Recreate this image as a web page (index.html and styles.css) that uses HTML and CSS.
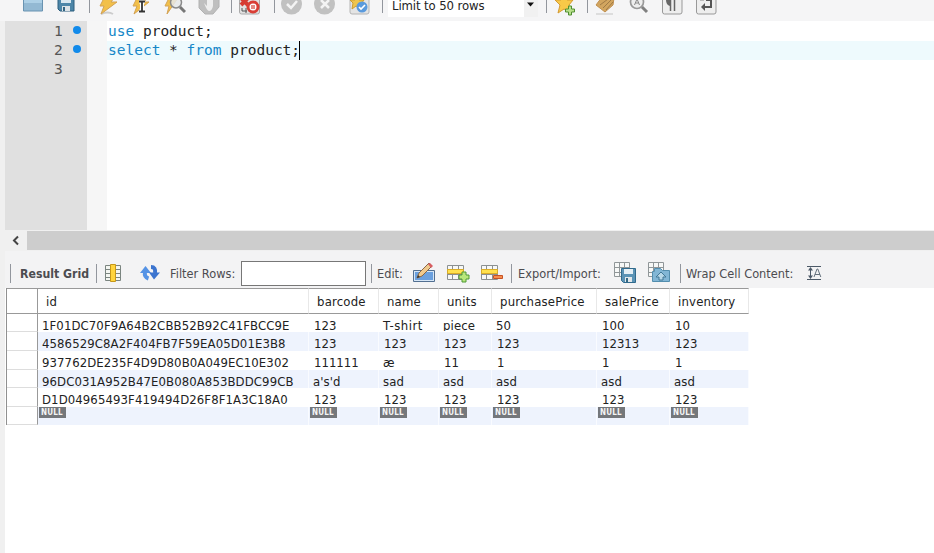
FILE: index.html
```html
<!DOCTYPE html>
<html lang="en">
<head>
<meta charset="utf-8">
<title>SQL Editor</title>
<link rel="stylesheet" href="styles.css">
</head>
<body>
<div class="window">
  <header class="toolbar">
    <svg class="folder" viewBox="0 0 22 16"><path d="M1.500-2h19v13h-19z" fill="#93b9d3" stroke="#6993b1"/><path d="M2 0h18v3H2z" fill="#add0e6"/></svg>
    <svg class="save" viewBox="0 0 18 16"><path d="M1-2h16v13H3l-2-2z" fill="#4d86a8" stroke="#2c5f7e"/><path d="M4 0h10v3H4z" fill="#d9e7ef"/><path d="M5 6h8v5H5z" fill="#dce3e7"/><path d="M6 7h2v4H6z" fill="#326482"/></svg>
    <i class="sep"></i>
    <svg class="icon" viewBox="0 0 22 16"><path d="M3 14q7-3 12 0" stroke="#ccc" stroke-width="2" fill="none"/><path d="M6-2h10l-3 4h6L3 14l3-8H2z" fill="#f2c04a" stroke="#d3a254"/></svg>
    <svg class="icon" viewBox="0 0 22 16"><path d="M6-2h10l-3 4h5L3 14l3-8H2z" fill="#f2c04a" stroke="#d3a254"/><path d="M8 1.500h6M11 1.500v10M8 11.500h6" stroke="#fff" stroke-width="4"/><path d="M8 1.500h6M11 1.500v10M8 11.500h6" stroke="#333" stroke-width="1.800"/></svg>
    <svg class="icon" viewBox="0 0 22 16"><path d="M5-2h9L3 14l2-8H1z" fill="#f2c04a" stroke="#d3a254"/><circle cx="12" cy="2.500" r="5.500" fill="#e5e8e9" fill-opacity=".85" stroke="#8a8a8a" stroke-width="1.500"/><path d="m16 7 5 5" stroke="#777" stroke-width="3"/></svg>
    <svg class="icon" viewBox="0 0 22 16"><path d="M1-2h20v9l-6 7H7L1 8z" fill="#bfbfbf" stroke="#b2b2b2"/><path d="M6 3l3 3V0h2v4-5h2v5-4h2v6q-1 5-4 5-2 0-5-8z" fill="#eee"/></svg>
    <i class="sep"></i>
    <svg class="icon" viewBox="0 0 22 16"><rect x=".5" y="-3" width="20" height="17" rx="2" fill="#e1e1e1" stroke="#aaa"/><path d="M2-2l7 7M9-2L2 5" stroke="#d63b32" stroke-width="4"/><path d="M3 8v3h5M7 8v5" stroke="#555" fill="none"/><circle cx="14" cy="7" r="5" fill="#fff" stroke="#d93e35" stroke-width="3"/><path d="M12 5h4v4h-4z" fill="#e58b83"/></svg>
    <i class="sep"></i>
    <svg class="icon" viewBox="0 0 22 16"><circle cx="10.500" cy="4" r="10.500" fill="#c1c1c1"/><path d="m6 4 4 4 6-7" fill="none" stroke="#f3f3f3" stroke-width="2.500"/></svg>
    <svg class="icon" viewBox="0 0 22 16"><circle cx="10.500" cy="4" r="10.500" fill="#c1c1c1"/><path d="m7 0 8 8M15 0 7 8" stroke="#f3f3f3" stroke-width="2.500"/></svg>
    <svg class="icon" viewBox="0 0 22 16"><rect x="1" y="-3" width="19" height="17" rx="2" fill="#e4e4e4" stroke="#b4b4b4"/><path d="M8-3l2 3h5l-3 4 1 5-6-3-4 3 1-6-3-3h5z" fill="#efc54d" stroke="#ce9c30"/><circle cx="13" cy="7" r="5.500" fill="#5a9add"/><path d="m10 7 2 2 4-4" fill="none" stroke="#fff" stroke-width="1.600"/></svg>
    <i class="sep"></i>
    <div class="select"><span>Limit to 50 rows</span><b><svg viewBox="0 0 14 16"><path d="M3 2.500h7L6.500 6.500z" fill="#111"/></svg></b></div>
    <i class="sep"></i>
    <svg class="icon" viewBox="0 0 22 16"><path d="m9-7 3 7h6l-4 5 2 8-7-4-6 4 2-8-5-5h6z" fill="#f8c948" stroke="#d49a32"/><path d="M13.500 6h3v3h3v3h-3v3h-3v-3h-3V9h3z" fill="#b8e08b" stroke="#508f30"/></svg>
    <i class="sep"></i>
    <svg class="icon" viewBox="0 0 22 16"><path d="M1 14h17" stroke="#ddd" stroke-width="2"/><path d="M7-3l12 1-1 7-8 7L1 5z" fill="#d2a55f" stroke="#c09050"/><path d="m5 5 8-6M8 8l8-8M11 10l7-8" stroke="#a07a45"/></svg>
    <svg class="icon" viewBox="0 0 22 16"><circle cx="8" cy="2" r="6.500" fill="#eee" stroke="#999" stroke-width="1.700"/><path d="m5.500 5 2.500-6 2.500 6M6.500 3h3" stroke="#888" fill="none"/><path d="m13 7 5 5" stroke="#808080" stroke-width="3"/></svg>
    <svg class="icon" viewBox="0 0 22 16"><rect x=".5" y="-3" width="19.500" height="17" rx="2" fill="#eee" stroke="#999"/><path d="M12.500-2v13M8.500-2v13" stroke="#666" stroke-width="1.500"/><path d="M8 0v6Q4 5 4 0" fill="#666"/></svg>
    <svg class="icon" viewBox="0 0 22 16"><rect x=".5" y="-3" width="19.500" height="17" rx="2" fill="#eee" stroke="#999"/><path d="M10 0h5v7H8" fill="none" stroke="#555" stroke-width="2"/><path d="M9 3v8L5 7z" fill="#555"/><path d="M4 0h4" stroke="#888"/></svg>
  </header>

  <main class="content">
    <section class="editor">
      <div class="gutter">
        <div class="line-no">1<i></i></div>
        <div class="line-no">2<i></i></div>
        <div class="line-no">3</div>
      </div>
      <div class="fold"></div>
      <div class="code">
        <div class="line"><span class="kw">use</span> product;</div>
        <div class="line current"><span class="kw">select</span> * <span class="kw">from</span> product;<i class="caret"></i></div>
        <div class="line"></div>
      </div>
    </section>
    <div class="scrollbar"><svg viewBox="0 0 21 19"><path d="M13 5.500 9 9.500l4 4" fill="none" stroke="#444" stroke-width="2"/></svg><div class="thumb"></div></div>

    <div class="resultbar">
      <i class="sep"></i>
      <span class="title">Result Grid</span>
      <i class="sep"></i>
      <svg class="tool" viewBox="0 0 18 20"><path d="M1.500 2.500h15v15h-15zM1 6.500h16M1 10.500h16M1 14.500h16" fill="#f4f6f1" stroke="#7b8580"/><path d="M6.500 1.500h5v17h-5z" fill="#ffd43d" stroke="#c69719"/></svg>
      <svg class="tool refresh" viewBox="0 0 20 20"><path d="M8.500 15.500Q4 14 5 9" fill="none" stroke="#5593e5" stroke-width="4"/><path d="M0 10 5.500 3l5.500 7z" fill="#5593e5"/><path d="M11 4q5 0 4 6" fill="none" stroke="#3b74cf" stroke-width="4"/><path d="M9 9.500h11l-6 7z" fill="#3b74cf"/></svg>
      <span class="filter">Filter Rows:</span>
      <input class="search" type="text" aria-label="Filter rows">
      <i class="sep"></i>
      <span class="edit">Edit:</span>
      <svg class="tool pencil" viewBox="0 0 24 20"><path d="M1.500 7.500h21v11h-21z" fill="#d6e6f6" stroke="#526f91"/><path d="M3 9h18v8H3z" fill="#6aa0df"/><path d="m5 15 2-5L17 0l3 3-10 10z" fill="#f0ca8d" stroke="#8a6847"/><path d="m16 1 2-1 3 3-2 2z" fill="#d85c60"/><path d="m5 15 1-3 2 2z" fill="#333"/></svg>
      <svg class="tool rows" viewBox="0 0 24 20"><path d="M1.500 2.500h16v14h-16zM1 6.500h17M1 11.500h17M6.500 2v15M12.500 2v15" fill="#f7f8f7" stroke="#8b9091"/><path d="M1.500 6.500h16v4h-16z" fill="#ffe14d" stroke="#daac27"/><path d="M16 9h4v3h3v4h-3v3h-4v-3h-3v-4h3z" fill="#b8e77b" stroke="#4e9936"/></svg>
      <svg class="tool rows" viewBox="0 0 24 20"><path d="M1.500 2.500h16v14h-16zM1 6.500h17M1 11.500h17M6.500 2v15M12.500 2v15" fill="#f7f8f7" stroke="#8b9091"/><path d="M1.500 6.500h16v4h-16z" fill="#ffe14d" stroke="#daac27"/><path d="M13.500 12.500h9v3h-9z" fill="#f58c4d" stroke="#c65224"/></svg>
      <i class="sep export-sep"></i>
      <span class="export">Export/Import:</span>
      <svg class="tool disk" viewBox="0 0 24 22"><path d="M1.500.5h15v14h-15zM1 5.500h16M1 10.500h16M6.500 0v15M11.500 0v15" fill="#f7f8f7" stroke="#909698"/><path d="M8.500 6.500h14v14h-12l-2-2z" fill="#5b93b5" stroke="#316a8c"/><path d="M11 7h9v5h-9z" fill="#e5eff5"/><path d="M12 15h7v5h-7z" fill="#e2e8eb"/><path d="M13 16h2v4h-2z" fill="#346985"/></svg>
      <svg class="tool disk" viewBox="0 0 24 22"><path d="M1.500.5h15v14h-15zM1 5.500h16M1 10.500h16M6.500 0v15M11.500 0v15" fill="#f7f8f7" stroke="#909698"/><path d="M5.500 19.500V9.500h2v-3h6l2 2h7v11z" fill="#82b6d5" stroke="#538eae"/><path d="m14 10 5 5h-3v3h-4v-3H9z" fill="#b8d8e8" stroke="#427997"/></svg>
      <i class="sep wrap-sep"></i>
      <span class="wrap">Wrap Cell Content:</span>
      <svg class="tool wrap-icon" viewBox="0 0 16 16"><path d="M1 1.500h14M1 14.500h14M4.500 3v10" stroke="#4c5967"/><path d="M2 5.500 4.500 2 7 5.500zM2 10.500 4.500 14 7 10.500z" fill="#4c5967"/><path d="m8 12 3-8h.8l3 8M9 9.500h5" fill="none" stroke="#65717d"/></svg>
    </div>

    <table class="grid">
      <colgroup><col class="c0"><col class="c1"><col class="c2"><col class="c3"><col class="c4"><col class="c5"><col class="c6"><col class="c7"></colgroup>
      <thead><tr><th></th><th>id</th><th>barcode</th><th>name</th><th>units</th><th class="pp">purchasePrice</th><th>salePrice</th><th>inventory</th></tr></thead>
      <tbody>
        <tr class="short"><td></td><td class="r1">1F01DC70F9A64B2CBB52B92C41FBCC9E</td><td class="n">123</td><td class="shirt">T-shirt</td><td><span class="clip">piece</span></td><td>50</td><td class="n">100</td><td class="n">10</td></tr>
        <tr><td></td><td class="r2">4586529C8A2F404FB7F59EA05D01E3B8</td><td class="n">123</td><td class="n">123</td><td class="n">123</td><td class="n">123</td><td class="n">12313</td><td class="n">123</td></tr>
        <tr><td></td><td class="r3">937762DE235F4D9D80B0A049EC10E302</td><td class="n">111111</td><td>æ</td><td class="n">11</td><td class="n">1</td><td class="n">1</td><td class="n">1</td></tr>
        <tr class="short"><td></td><td class="r4">96DC031A952B47E0B080A853BDDC99CB</td><td>a's'd</td><td>sad</td><td>asd</td><td>asd</td><td>asd</td><td>asd</td></tr>
        <tr><td></td><td class="r5">D1D04965493F419494D26F8F1A3C18A0</td><td class="n">123</td><td class="n">123</td><td class="n">123</td><td class="n">123</td><td class="n">123</td><td class="n">123</td></tr>
        <tr class="nulls short"><td></td><td><span>NULL</span></td><td><span>NULL</span></td><td><span>NULL</span></td><td><span>NULL</span></td><td><span>NULL</span></td><td><span>NULL</span></td><td><span>NULL</span></td></tr>
      </tbody>
    </table>
  </main>
</div>
</body>
</html>
```
FILE: styles.css
```css
* { box-sizing: border-box; }
body { margin: 0; overflow: hidden; background: #fff; color: #242424; font-family: "DejaVu Sans Condensed", "DejaVu Sans", sans-serif; font-size: 13px; }
.window { width: 934px; height: 553px; background: #f0f0f0; }
svg { display: block; }
.sep { width: 1px; background: #92969d; }

.toolbar { height: 21px; background: #f5f5f6; display: grid; align-items: start;
  padding-left: 22px;
  grid-template-columns: 35px 32px 9px 33px 33px 34px 33px 8px 35px 7px 33px 35px 33px 6px 158px 9px 32px 8px 34px 33px 34px 22px; }
.toolbar > svg { width: 22px; height: 16px; }
.toolbar .save { width: 18px; }
.toolbar .sep { height: 13px; }
.select { width: 150px; height: 17px; background: #fff; display: flex; justify-content: space-between; }
.select span { padding-left: 4px; line-height: 11px; letter-spacing: -.1px; white-space: nowrap; }
.select b { width: 14px; background: #f1f1f1; }
.select svg { width: 14px; height: 16px; }

.content { margin-left: 5px; height: 532px; background: #fff; }
.editor { height: 209px; display: flex; font: 14.5px/19px "DejaVu Sans Mono", monospace; }
.gutter { width: 82px; background: #e0e0e0; padding-top: 1px; }
.line-no { height: 19px; padding-left: 49px; display: flex; align-items: center; color: #555; }
.line-no i { width: 8px; height: 8px; border-radius: 50%; background: #118aea; margin: -3px 0 0 10px; }
.fold { width: 20px; background: #f6f6f6; }
.code { flex: 1; padding-top: 1px; }
.line { height: 19px; padding-left: 1px; display: flex; white-space: pre; color: #222; }
.kw { color: #1687c8; }
.current { background: #eefafd; }
.caret { width: 1px; height: 19px; background: #000; margin-left: -1px; }

.scrollbar { height: 21px; padding-top: 1px; background: #f0f0f0; display: flex; }
.scrollbar svg { width: 21px; height: 19px; }
.thumb { flex: 1; height: 19px; margin-left: 1px; background: #cdcdcd; }

.resultbar { height: 37px; padding: 7px 0 0 5px; background: #f3f3f4; display: flex; align-items: center; color: #4c4c50; font-family: "DejaVu Sans", sans-serif; font-size: 11.4px; letter-spacing: 0; white-space: nowrap; }
.resultbar .sep { height: 19px; flex: none; }
.resultbar span { flex: none; height: 14px; line-height: 16px; }
.resultbar .title { width: 76px; margin: 0 0 0 9px; font: bold 12.200px/16px "DejaVu Sans Condensed", sans-serif; }
.resultbar .tool { flex: none; width: 18px; height: 20px; margin-left: 7px; }
.resultbar .refresh { width: 20px; margin-left: 18px; }
.filter { width: 71px; margin-left: 10px; }
.search { width: 125px; height: 25px; margin-right: 5px; border: 1px solid #777; background: #fff; padding: 2px; flex: none; }
.edit { width: 30px; margin-left: 5px; }
.resultbar .pencil { width: 24px; margin-left: 5px; }
.resultbar .rows { width: 24px; margin-left: 10px; }
.export-sep { margin-left: 7px; }
.export { width: 90px; margin-left: 6px; }
.resultbar .disk { width: 24px; height: 22px; margin-left: 5px; }
.resultbar .disk + .disk { margin-left: 10px; }
.wrap-sep { margin-left: 9px; }
.wrap { width: 113px; margin-left: 5px; }
.resultbar .wrap-icon { width: 16px; }

.grid { width: 743px; margin-left: 1px; table-layout: fixed; border-collapse: separate; border-spacing: 0; border-left: 1px solid #909090; color: #222; white-space: nowrap; letter-spacing: .1px; }
.c0 { width: 31px; } .c1 { width: 271px; } .c2 { width: 70px; } .c3 { width: 60px; }
.c4 { width: 53px; } .c5 { width: 105px; } .c6 { width: 73px; } .c7 { width: 79px; }
.grid th { height: 26px; padding: 0 0 0 8px; border-top: 1px solid #999; border-bottom: 1px solid #999; border-right: 1px solid #e8e8e8; text-align: left; font-weight: normal; letter-spacing: .2px; }
.grid td { height: 19px; line-height: 13px; padding: 5px 0 0 4px; vertical-align: top; }
.grid .short td { height: 18px; }
.grid td.n { padding-left: 5px; letter-spacing: 0; }
.grid td.shirt { letter-spacing: .5px; }
.grid th:first-child, .grid td:first-child { border-right: 1px solid #999; }
.grid td:first-child { border-bottom: 1px solid #ddd; padding: 0; }
.grid tr:nth-child(even) td:not(:first-child) { background: #eef3fd; border-right: 1px solid #f9fbff; }
.clip { display: block; height: 12px; overflow: hidden; }
.grid .nulls td:not(:first-child) { padding: 0 0 0 1px; }
.nulls span { display: block; width: 27px; height: 11px; background: #74777b; color: #f5f5f5; font-size: 8px; font-weight: bold; line-height: 11px; padding-left: 2px; letter-spacing: .2px; }
```
